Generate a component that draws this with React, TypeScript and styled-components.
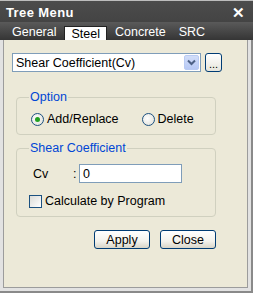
import React from "react";
import styled, { createGlobalStyle } from "styled-components";

const Global = createGlobalStyle`
	html, body {
		margin: 0;
		padding: 0;
		background: #ffffff;
	}
	body {
		font-family: "Liberation Sans", Arial, sans-serif;
		font-size: 12px;
		color: #000;
	}
`;

const Window = styled.div`
	width: 253px;
	height: 293px;
	box-sizing: border-box;
	display: flex;
	flex-direction: column;
	background: #e2e2e2;
	border-right: 2px solid #8a8a8a;
	border-bottom: 2px solid #8a8a8a;
`;

const TitleBar = styled.div`
	height: 22px;
	box-sizing: border-box;
	margin-right: -2px;
	display: flex;
	align-items: center;
	justify-content: space-between;
	padding: 1px 8px 0 6px;
	background: linear-gradient(#4c4c4c, #444444);
	border-top: 1px solid #bdbdbd;
	color: #ffffff;
`;

const Title = styled.span`
	font-weight: bold;
	font-size: 13px;
	letter-spacing: 0.4px;
`;

const CloseX = styled.span`
	font-weight: bold;
	font-size: 15px;
	line-height: 1;
`;

const TabBar = styled.div`
	height: 18px;
	margin-right: -2px;
	display: flex;
	align-items: flex-end;
	gap: 8px;
	padding-left: 12px;
	background: linear-gradient(#5a5a5a, #353535);
`;

const Tab = styled.div<{ $active?: boolean; $extra?: number }>`
	height: ${(p) => (p.$active ? "14px" : "16px")};
	box-sizing: border-box;
	display: flex;
	align-items: center;
	padding: ${(p) => (p.$active ? "0 6px" : "0")};
	margin-left: ${(p) => p.$extra ?? 0}px;
	color: ${(p) => (p.$active ? "#000" : "#fff")};
	background: ${(p) => (p.$active ? "#ffffff" : "transparent")};
	border: ${(p) => (p.$active ? "1px solid #222" : "none")};
	border-bottom: none;
	font-size: 12.5px;
`;

const Body = styled.div`
	flex: 1;
	margin: 0 3px 3px 3px;
	background: #ece9d8;
	border: 1px solid #9c9c9c;
	border-top: none;
	padding: 13px 0 0 8px;
	display: flex;
	flex-direction: column;
	font-size: 12.5px;
`;

const ComboRow = styled.div`
	display: flex;
	align-items: center;
	gap: 4px;
`;

const Combo = styled.div`
	width: 189px;
	height: 19px;
	box-sizing: border-box;
	background: #fff;
	border: 1px solid #7f9db9;
	display: flex;
	align-items: center;
	justify-content: space-between;
	padding: 1px 1px 1px 3px;
`;

const DropBtn = styled.div`
	width: 15px;
	height: 15px;
	border-radius: 2px;
	background: linear-gradient(#d2def9, #b7c9f5);
	border: 1px solid #b9cbf3;
	box-sizing: border-box;
	display: flex;
	align-items: center;
	justify-content: center;
`;

const SmallBtn = styled.div`
	width: 17px;
	height: 19px;
	box-sizing: border-box;
	border: 1px solid #003c74;
	border-radius: 3px;
	background: linear-gradient(#ffffff, #e6e5dc);
	display: flex;
	align-items: flex-end;
	justify-content: center;
	font-size: 11px;
	line-height: 13px;
`;

const Group = styled.div<{ $top: number; $height: number }>`
	margin: ${(p) => p.$top}px 0 0 4px;
	width: 200px;
	height: ${(p) => p.$height}px;
	box-sizing: border-box;
	border: 1px solid #d0d0bf;
	border-radius: 4px;
	padding: 0 0 0 12px;
	display: flex;
	flex-direction: column;
	align-items: flex-start;
`;

const Legend = styled.span`
	margin-top: -8px;
	height: 14px;
	line-height: 14px;
	color: #0046d5;
	padding: 0 1px;
	background: #ece9d8;
`;

const Row = styled.div<{ $gap?: number; $top?: number; $left?: number }>`
	display: flex;
	align-items: center;
	gap: ${(p) => p.$gap ?? 0}px;
	margin-top: ${(p) => p.$top ?? 0}px;
	margin-left: ${(p) => p.$left ?? 0}px;
	line-height: 14px;
`;

const Choice = styled.label`
	display: flex;
	align-items: center;
	gap: 3px;
`;

const Radio = styled.span<{ $on?: boolean }>`
	width: 13px;
	height: 13px;
	box-sizing: border-box;
	border-radius: 50%;
	border: 1px solid #1c5180;
	background: radial-gradient(circle at 40% 40%, #ffffff, #dcdcd4);
	display: flex;
	align-items: center;
	justify-content: center;
	&::after {
		content: "";
		display: ${(p) => (p.$on ? "block" : "none")};
		width: 5px;
		height: 5px;
		border-radius: 50%;
		background: #21a121;
	}
`;

const Check = styled.span`
	width: 13px;
	height: 13px;
	box-sizing: border-box;
	border: 1px solid #1c5180;
	background: linear-gradient(135deg, #dcdcd7, #ffffff);
`;

const FieldLabel = styled.span`
	width: 40px;
	padding-left: 4px;
`;

const Colon = styled.span`
	width: 6px;
`;

const TextBox = styled.div`
	width: 103px;
	height: 19px;
	box-sizing: border-box;
	border: 1px solid #7f9db9;
	background: #fff;
	padding-left: 3px;
	display: flex;
	align-items: center;
`;

const Actions = styled.div`
	display: flex;
	gap: 10px;
	margin: 13px 0 0 82px;
`;

const Button = styled.div`
	width: 56px;
	height: 19px;
	box-sizing: border-box;
	border: 1px solid #003c74;
	border-radius: 3px;
	background: linear-gradient(#ffffff 0%, #f3f2ec 60%, #d8d5c8 100%);
	display: flex;
	align-items: center;
	justify-content: center;
`;

const Chevron = () => (
	<svg width="9" height="7" viewBox="0 0 9 7">
		<path d="M1 1.5 L4.5 5 L8 1.5" fill="none" stroke="#4d6185" strokeWidth="2" />
	</svg>
);

export default function App() {
	return (
		<>
			<Global />
			<Window>
				<TitleBar>
					<Title>Tree Menu</Title>
					<CloseX>✕</CloseX>
				</TitleBar>
				<TabBar>
					<Tab>General</Tab>
					<Tab $active>Steel</Tab>
					<Tab>Concrete</Tab>
					<Tab $extra={5}>SRC</Tab>
				</TabBar>
				<Body>
					<ComboRow>
						<Combo>
							<span>Shear Coefficient(Cv)</span>
							<DropBtn>
								<Chevron />
							</DropBtn>
						</Combo>
						<SmallBtn>...</SmallBtn>
					</ComboRow>
					<Group $top={25} $height={38}>
						<Legend>Option</Legend>
						<Row $gap={23} $top={8} $left={2}>
							<Choice>
								<Radio $on />
								Add/Replace
							</Choice>
							<Choice>
								<Radio />
								Delete
							</Choice>
						</Row>
					</Group>
					<Group $top={13} $height={69}>
						<Legend>Shear Coefficient</Legend>
						<Row $top={9}>
							<FieldLabel>Cv</FieldLabel>
							<Colon>:</Colon>
							<TextBox>0</TextBox>
						</Row>
						<Row $top={11}>
							<Choice>
								<Check />
								Calculate by Program
							</Choice>
						</Row>
					</Group>
					<Actions>
						<Button>Apply</Button>
						<Button>Close</Button>
					</Actions>
				</Body>
			</Window>
		</>
	);
}
